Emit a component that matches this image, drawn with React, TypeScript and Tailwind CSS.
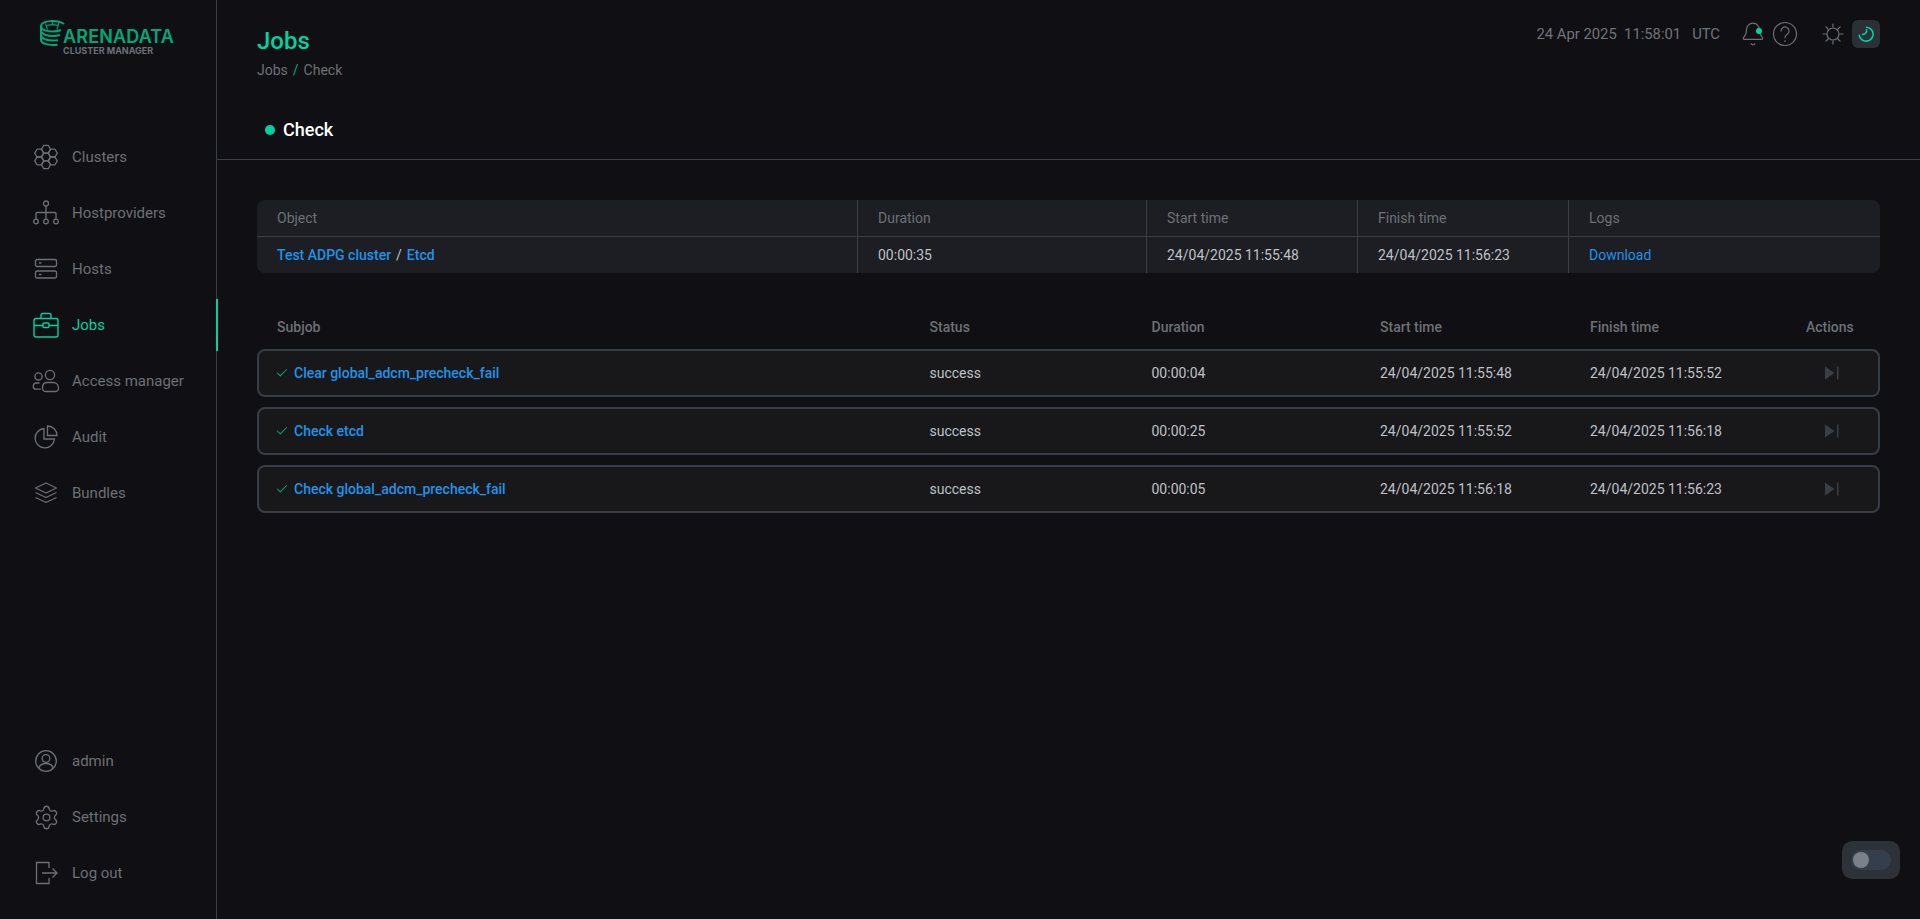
import { Bell, Check, Settings } from "lucide-react"

const font = { fontFamily: "Roboto, sans-serif" }

function Hexes() {
    const r = 4.5
    const d = 7.8
    const hex = (cx: number, cy: number, key: number) => {
        const pts = [0, 1, 2, 3, 4, 5]
            .map((i) => {
                const a = (Math.PI / 3) * i
                return `${(cx + r * Math.cos(a)).toFixed(2)},${(cy + r * Math.sin(a)).toFixed(2)}`
            })
            .join(" ")
        return <polygon key={key} points={pts} strokeLinejoin="round" />
    }
    const centers = [
        [13, 13],
        [13, 13 - d],
        [13, 13 + d],
        [13 - 1.5 * r, 13 - d / 2],
        [13 + 1.5 * r, 13 - d / 2],
        [13 - 1.5 * r, 13 + d / 2],
        [13 + 1.5 * r, 13 + d / 2],
    ]
    return (
        <svg width="26" height="26" viewBox="0 0 26 26" fill="none" stroke="currentColor" strokeWidth="1.3">
            {centers.map((c, i) => hex(c[0], c[1], i))}
        </svg>
    )
}

function HostproviderIcon() {
    return (
        <svg width="26" height="26" viewBox="0 0 26 26" fill="none" stroke="currentColor" strokeWidth="1.3">
            <circle cx="13" cy="3.5" r="2.5" />
            <path d="M13 6v13M3 19v-5.5a1 1 0 0 1 1-1h18a1 1 0 0 1 1 1V19" />
            <circle cx="3" cy="21.5" r="2.3" />
            <circle cx="13" cy="21.5" r="2.3" />
            <circle cx="23" cy="21.5" r="2.3" />
        </svg>
    )
}

function HostsIcon() {
    return (
        <svg width="24" height="22" viewBox="0 0 24 22" fill="none" stroke="currentColor" strokeWidth="1.3">
            <rect x="1.5" y="1.5" width="21" height="7" rx="1.5" />
            <rect x="1.5" y="13" width="21" height="7" rx="1.5" />
            <path d="M5 5h2.5M5 16.5h2.5" />
        </svg>
    )
}

function JobsIcon() {
    return (
        <svg width="26" height="26" viewBox="0 0 26 26" fill="none" stroke="currentColor" strokeWidth="1.4">
            <rect x="1" y="6.5" width="24" height="18.5" rx="2" />
            <path d="M8 6.5V3A1.5 1.5 0 0 1 9.5 1.5h7A1.5 1.5 0 0 1 18 3v3.5" />
            <path d="M1 13.5h9M16 13.5h9" />
            <rect x="10" y="11" width="6" height="4.5" rx="1" />
        </svg>
    )
}

function UsersIcon() {
    return (
        <svg width="28" height="24" viewBox="0 0 28 24" fill="none" stroke="currentColor" strokeWidth="1.3">
            <circle cx="18" cy="6" r="4.6" />
            <path d="M10.5 19c0-3.5 2-5.5 4.5-5.5h6c3 0 5.5 2 5.5 5.5 0 2-1.5 3.5-3.5 3.5h-9c-2 0-3.5-1.5-3.5-3.5Z" />
            <circle cx="6.5" cy="7.5" r="3.6" />
            <path d="M7.5 14H4c-1.7 0-2.7 1.5-2.7 3.5 0 1.8 1 2.7 2.5 2.7h5" />
        </svg>
    )
}

function AuditIcon() {
    return (
        <svg width="24" height="24" viewBox="0 0 24 24" fill="none" stroke="currentColor" strokeWidth="1.3">
            <path d="M10 3.5a9.7 9.7 0 1 0 10.5 10.5H10V3.5Z" />
            <path d="M13.5 1a9.5 9.5 0 0 1 9.5 9.5h-9.5V1Z" />
        </svg>
    )
}

function BundlesIcon() {
    return (
        <svg width="24" height="22" viewBox="0 0 24 22" fill="none" stroke="currentColor" strokeWidth="1.3" strokeLinejoin="round">
            <path d="M12 1 1.5 6 12 11l10.5-5L12 1Z" />
            <path d="m1.5 10.5 10.5 5 10.5-5" />
            <path d="m1.5 15.5 10.5 5 10.5-5" />
        </svg>
    )
}

function AdminIcon() {
    return (
        <svg width="24" height="24" viewBox="0 0 24 24" fill="none" stroke="currentColor" strokeWidth="1.3">
            <circle cx="12" cy="12" r="10.3" />
            <circle cx="12" cy="9.5" r="3.8" />
            <path d="M4.8 19c1-3 3.500-4.500 7.200-4.500s6.200 1.500 7.200 4.500" />
        </svg>
    )
}

function LogoutIcon() {
    return (
        <svg width="24" height="24" viewBox="0 0 24 24" fill="none" stroke="currentColor" strokeWidth="1.3">
            <path d="M15 7V1.5H2.5v21H15V17" />
            <path d="M8 12h15M18.500 7.500 23 12l-4.500 4.500" />
        </svg>
    )
}

function HelpIcon() {
    return (
        <svg width="26" height="26" viewBox="0 0 26 26" fill="none" stroke="currentColor" strokeWidth="1.2" strokeLinecap="round">
            <circle cx="13" cy="13" r="11.5" />
            <path d="M9 10a4 4 0 1 1 6.200 3.300c-1.400.9-2.200 1.700-2.200 3.500" />
            <path d="M13 20v.2" strokeWidth="1.6" />
        </svg>
    )
}

function SunIcon() {
    return (
        <svg width="24" height="24" viewBox="0 0 24 24" fill="none" stroke="currentColor" strokeWidth="1.2" strokeLinecap="round">
            <circle cx="12" cy="12" r="6" />
            <path d="M12 2v3M12 19v3M2 12h3M19 12h3M4.900 4.900 7 7M17 17l2.100 2.100M4.900 19.100 7 17M17 7l2.100-2.100" />
        </svg>
    )
}

function Moon() {
    return (
        <svg width="16" height="16" viewBox="0 0 16 16" fill="none" stroke="#00d2a0" strokeWidth="1.6" strokeLinecap="round">
            <path d="M8.500 1.200a7 7 0 1 1-7.300 8" />
            <path d="M8.500 3.800a3.600 3.600 0 0 1-3.900 4.500" />
        </svg>
    )
}

function Logo() {
    return (
        <div className="relative h-[40px] w-[135px]">
            <svg className="absolute left-0 top-0" width="26" height="26" viewBox="0 0 26 26" fill="none" stroke="#00a878" strokeWidth="2">
                <path d="M24 4C21 2 17 1 12.500 1 6 1 1 3 1 6.500 1 9.500 6 11.500 12.500 11.500c3.500 0 6.500-.5 8.500-1.500" />
                <path d="M5.500 3.500 7.500 9.500M12.500 1.500v4M19 2.500l-2 7M7 5.500c3-1 8-1 11 0" strokeWidth="1.1" />
                <path d="M1 6.500V20c0 3 5 5 12 5 1.500 0 3-.1 4.500-.3" />
                <path d="M1 11.500c2 3 7 4.500 12 4.500 2.500 0 5-.3 7-1M1 16c2 3.500 7 4.500 12 4.500 2 0 3.500-.1 5-.3" />
            </svg>
            <span className="absolute left-[23px] top-[5px] whitespace-nowrap text-[18px] font-semibold leading-[24px] tracking-[0.15px] text-[#00a878]" style={{ fontFamily: "Inter, sans-serif" }}>
                ARENADATA
            </span>
            <span className="absolute left-[23px] top-[25px] whitespace-nowrap text-[9px] font-bold leading-[12px] text-[#6c7078]" style={{ fontFamily: "Inter, sans-serif" }}>
                CLUSTER MANAGER
            </span>
        </div>
    )
}

function NavItem({ icon, label, active }: { icon: React.ReactNode; label: string; active?: boolean }) {
    return (
        <div className={`relative flex h-[56px] items-center ${active ? "text-[#00d2a0]" : "text-[#6d7076]"}`}>
            <div className="flex w-[72px] shrink-0 justify-center pl-[20px]">{icon}</div>
            <span className="text-[15px]">{label}</span>
            {active && <div className="absolute -right-[2px] top-[2px] h-[52px] w-[2px] bg-[#00d2a0]" />}
        </div>
    )
}

const subjobs = [
    { name: "Clear global_adcm_precheck_fail", duration: "00:00:04", start: "24/04/2025 11:55:48", finish: "24/04/2025 11:55:52" },
    { name: "Check etcd", duration: "00:00:25", start: "24/04/2025 11:55:52", finish: "24/04/2025 11:56:18" },
    { name: "Check global_adcm_precheck_fail", duration: "00:00:05", start: "24/04/2025 11:56:18", finish: "24/04/2025 11:56:23" },
]

const subjobCols = "grid grid-cols-[652.5px_222px_228.5px_210px_216px_1fr] items-center"
const jobCols = "grid grid-cols-[600px_289px_211px_211px_1fr]"

export default function App() {
    return (
        <div className="relative flex h-screen overflow-hidden bg-[#100f13] text-[14px]" style={font}>
            <aside className="flex h-full w-[217px] shrink-0 flex-col border-r border-[#3a3f47]">
                <div className="h-[129px] pl-[40px] pt-[20px]">
                    <Logo />
                </div>
                <nav>
                    <NavItem icon={<Hexes />} label="Clusters" />
                    <NavItem icon={<HostproviderIcon />} label="Hostproviders" />
                    <NavItem icon={<HostsIcon />} label="Hosts" />
                    <NavItem icon={<JobsIcon />} label="Jobs" active />
                    <NavItem icon={<UsersIcon />} label="Access manager" />
                    <NavItem icon={<AuditIcon />} label="Audit" />
                    <NavItem icon={<BundlesIcon />} label="Bundles" />
                </nav>
                <div className="mt-auto pb-[18px]">
                    <NavItem icon={<AdminIcon />} label="admin" />
                    <NavItem icon={<Settings size={27} strokeWidth={1.15} />} label="Settings" />
                    <NavItem icon={<LogoutIcon />} label="Log out" />
                </div>
            </aside>

            <main className="min-w-0 flex-1">
                <div className="flex h-[100px] justify-between pl-[40px] pr-[40px] pt-[23px]">
                    <div>
                        <h1 className="text-[24px] font-medium leading-[36px] text-[#00d2a0]">Jobs</h1>
                        <div className="mt-[1px] flex gap-[5px] leading-[20px] text-[#6d7076]">
                            <span>Jobs</span>
                            <span className="text-[#00a878]">/</span>
                            <span>Check</span>
                        </div>
                    </div>
                    <div className="-mt-[3px] flex h-[28px] items-center">
                        <span className="whitespace-pre text-[14.8px] text-[#70737a]">24 Apr 2025  11:58:01   UTC</span>
                        <div className="relative ml-[20px] text-[#6d7076]">
                            <Bell size={26} strokeWidth={1.1} />
                            <div className="absolute right-[4px] top-[7px] h-[6px] w-[6px] rounded-full bg-[#00d2a0]" />
                        </div>
                        <div className="ml-[6px] text-[#6d7076]">
                            <HelpIcon />
                        </div>
                        <div className="ml-[23px] text-[#6d7076]">
                            <SunIcon />
                        </div>
                        <div className="ml-[7px] flex h-[28px] w-[28px] items-center justify-center rounded-[6px] bg-[#2b3037]">
                            <Moon />
                        </div>
                    </div>
                </div>

                <div className="flex h-[60px] items-center gap-[8px] border-b border-[#3a3f47] pl-[48px]">
                    <div className="h-[10px] w-[10px] rounded-full bg-[#00d2a0]" />
                    <span className="text-[18px] font-medium text-white">Check</span>
                </div>

                <div className="px-[40px] pt-[40px]">
                    <div className="overflow-hidden rounded-[8px] bg-[#1c1e23]">
                        <div className={`${jobCols} h-[37px] items-stretch border-b border-[#3a3f47] text-[#6d7076]`}>
                            {["Object", "Duration", "Start time", "Finish time", "Logs"].map((h, i) => (
                                <div key={h} className={`flex items-center pl-[20px] ${i > 0 ? "border-l border-[#3a3f47]" : ""}`}>
                                    {h}
                                </div>
                            ))}
                        </div>
                        <div className={`${jobCols} h-[36px] items-stretch text-[#bfc1c6]`}>
                            <div className="flex items-center gap-[5px] pl-[20px] font-medium text-[#1f93e8]">
                                <span>Test ADPG cluster</span>
                                <span className="font-normal text-[#bfc1c6]">/</span>
                                <span>Etcd</span>
                            </div>
                            <div className="flex items-center border-l border-[#3a3f47] pl-[20px]">00:00:35</div>
                            <div className="flex items-center border-l border-[#3a3f47] pl-[20px]">24/04/2025 11:55:48</div>
                            <div className="flex items-center border-l border-[#3a3f47] pl-[20px]">24/04/2025 11:56:23</div>
                            <div className="flex items-center border-l border-[#3a3f47] pl-[20px] text-[#1f93e8]">Download</div>
                        </div>
                    </div>

                    <div className={`${subjobCols} mt-[36px] mb-[4px] h-[36px] px-[20px] font-medium text-[#6d7076]`}>
                        <span>Subjob</span>
                        <span>Status</span>
                        <span>Duration</span>
                        <span>Start time</span>
                        <span>Finish time</span>
                        <span>Actions</span>
                    </div>

                    <div className="flex flex-col gap-[10px]">
                        {subjobs.map((job) => (
                            <div key={job.name} className={`${subjobCols} h-[48px] rounded-[8px] border-2 border-[#383d45] bg-[#18181b] px-[18px] text-[#bfc1c6]`}>
                                <div className="flex items-center gap-[5px] font-medium text-[#1f93e8]">
                                    <Check className="-ml-[2px] text-[#00a878]" size={14} strokeWidth={1.8} />
                                    <span>{job.name}</span>
                                </div>
                                <span>success</span>
                                <span>{job.duration}</span>
                                <span>{job.start}</span>
                                <span>{job.finish}</span>
                                <div className="flex justify-center pr-[2px]">
                                    <svg width="14" height="14" viewBox="0 0 14 14" fill="#3a3f47">
                                        <path d="M0 .5v13l9.5-6.500L0 .5Z" />
                                        <rect x="12" y=".5" width="1.5" height="13" />
                                    </svg>
                                </div>
                            </div>
                        ))}
                    </div>
                </div>
            </main>

            <div className="absolute bottom-[40px] right-[20px] flex h-[38px] w-[58px] items-center justify-center rounded-[10px] bg-[#2d3138]">
                <div className="flex h-[20px] w-[40px] items-center rounded-full bg-[#343f4b] pl-[2px]">
                    <div className="h-[16px] w-[16px] rounded-full bg-[#7c808a]" />
                </div>
            </div>
        </div>
    )
}
